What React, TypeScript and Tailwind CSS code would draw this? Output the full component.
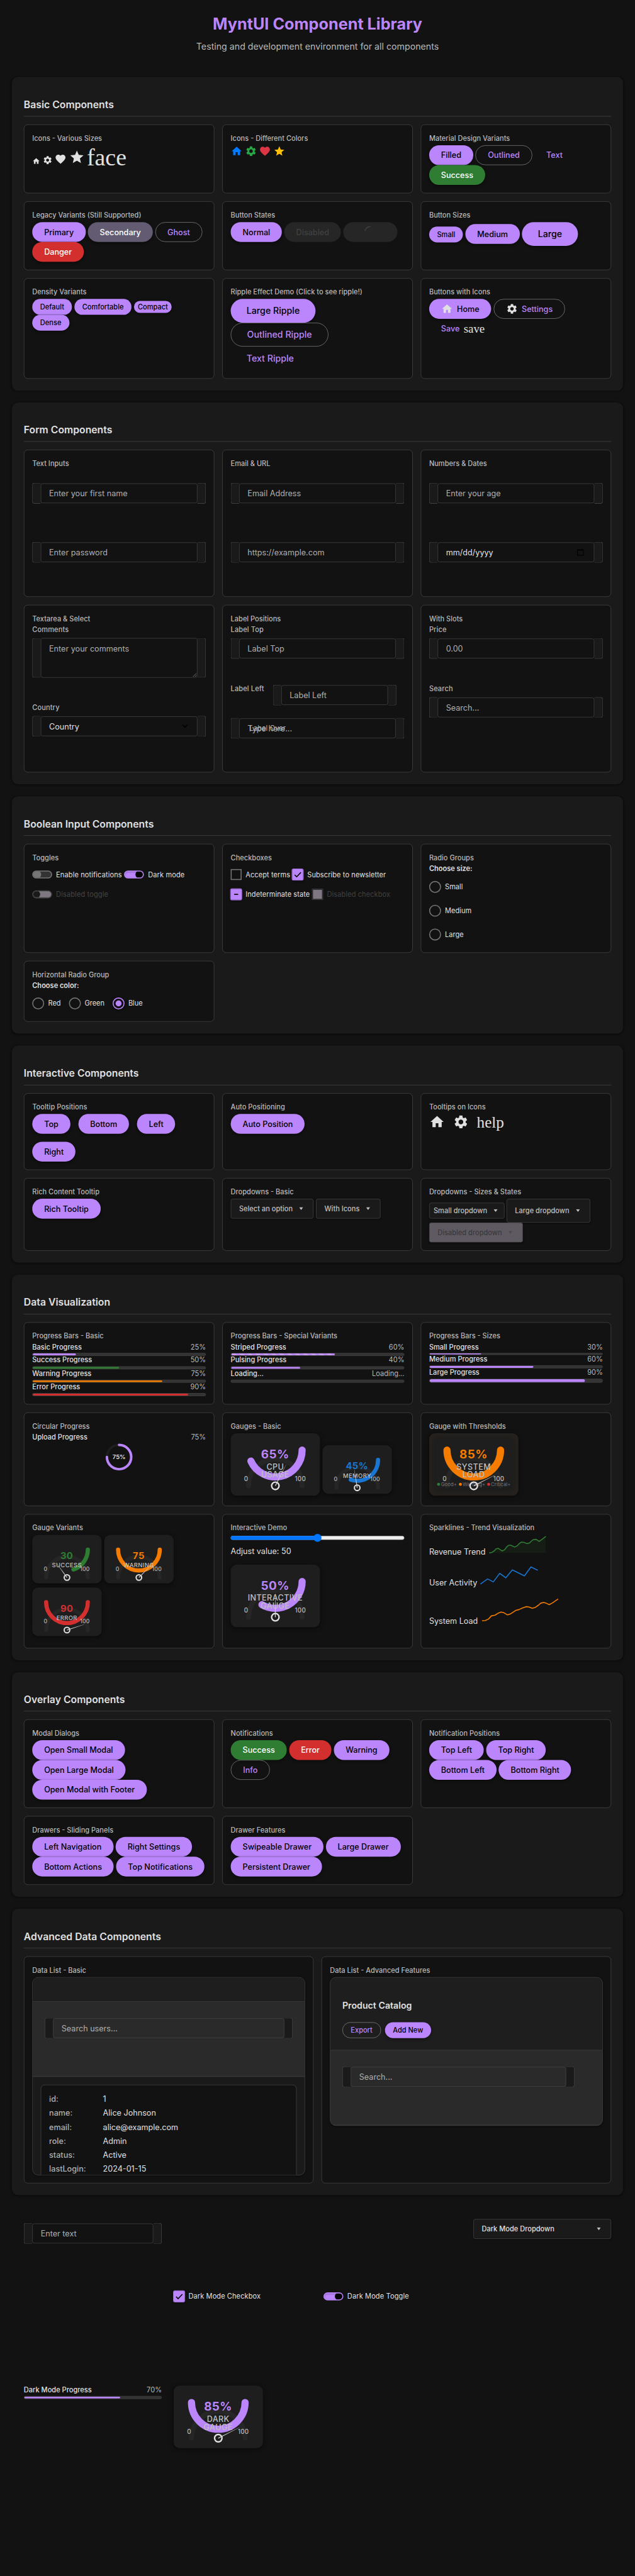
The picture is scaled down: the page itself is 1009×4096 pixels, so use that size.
import React from "react";

const HOME = "M10 20v-6h4v6h5v-8h3L12 3 2 12h3v8z";
const GEAR =
  "M19.14 12.94c.04-.3.06-.61.06-.94 0-.32-.02-.64-.07-.94l2.03-1.58c.18-.14.23-.41.12-.61l-1.92-3.32c-.12-.22-.37-.29-.59-.22l-2.39.96c-.5-.38-1.03-.7-1.62-.94l-.36-2.54c-.04-.24-.24-.41-.48-.41h-3.84c-.24 0-.43.17-.47.41l-.36 2.54c-.59.24-1.13.57-1.62.94l-2.39-.96c-.22-.08-.47 0-.59.22L2.74 8.87c-.12.21-.08.47.12.61l2.03 1.58c-.05.3-.09.63-.09.94s.02.64.07.94l-2.03 1.58c-.18.14-.23.41-.12.61l1.92 3.32c.12.22.37.29.59.22l2.39-.96c.5.38 1.03.7 1.62.94l.36 2.54c.05.24.24.41.48.41h3.84c.24 0 .44-.17.47-.41l.36-2.54c.59-.24 1.13-.56 1.62-.94l2.39.96c.22.08.47 0 .59-.22l1.92-3.32c.12-.22.07-.47-.12-.61l-2.01-1.58zM12 15.6c-1.98 0-3.6-1.62-3.6-3.6s1.62-3.6 3.6-3.6 3.6 1.62 3.6 3.6-1.62 3.6-3.6 3.6z";
const HEART =
  "M12 21.35l-1.45-1.32C5.4 15.36 2 12.28 2 8.5 2 5.42 4.42 3 7.5 3c1.74 0 3.41.81 4.5 2.09C13.09 3.81 14.76 3 16.5 3 19.58 3 22 5.42 22 8.5c0 3.78-3.4 6.86-8.55 11.54L12 21.35z";
const STAR = "M12 17.27L18.18 21l-1.64-7.03L22 9.24l-7.19-.61L12 2 9.19 8.63 2 9.24l5.46 4.73L5.82 21z";

function Icon({ d, size = 24, color = "#e0e0e0" }: { d: string; size?: number; color?: string }) {
  return (
    <svg width={size} height={size} viewBox="0 0 24 24" fill={color} className="block shrink-0">
      <path d={d} />
    </svg>
  );
}

function Section({ title, grid, children }: { title: string; grid: string; children: React.ReactNode }) {
  return (
    <section className="rounded-xl bg-[#1a1a1a] p-6 shadow-[0_1px_4px_rgba(0,0,0,0.5)]">
      <h2 className="mt-[16.6px] border-b border-[#444444] pb-2 text-[20px] font-semibold leading-[30px] text-[#e0e0e0]">
        {title}
      </h2>
      <div className={"mt-4 grid gap-4 " + grid}>{children}</div>
    </section>
  );
}

function Card({ title, children }: { title: string; children?: React.ReactNode }) {
  return (
    <div className="min-w-0 rounded-lg border border-[#444444] bg-[#121212] p-4">
      <h3 className="mb-1 text-[14px] font-medium leading-[21px] text-[#b8b8b8]">{title}</h3>
      {children}
    </div>
  );
}

function Row({ children }: { children: React.ReactNode }) {
  return <div className="flex items-baseline gap-[4.5px]">{children}</div>;
}

const VARIANTS = {
  filled: "bg-[#bb86fc] text-black shadow-[0_2px_6px_rgba(0,0,0,0.5)]",
  success: "bg-[#2e7d32] text-white shadow-[0_2px_6px_rgba(0,0,0,0.5)]",
  danger: "bg-[#d32f2f] text-white shadow-[0_2px_6px_rgba(0,0,0,0.5)]",
  secondary: "bg-[#625b71] text-white shadow-[0_2px_6px_rgba(0,0,0,0.5)]",
  outlined: "border border-[#7c7c7c] text-[#bb86fc]",
  text: "text-[#bb86fc]",
  disabled: "bg-[#262626] text-[#404040]",
};
const SIZES = {
  compact: "h-6 rounded-[12px] px-2 text-[14px]",
  small: "h-8 rounded-[16px] px-4 text-[14px]",
  medium: "h-10 rounded-[20px] px-6 text-[16px]",
  large: "h-12 rounded-[24px] px-8 text-[18px]",
};

function Button({
  v = "filled",
  s = "medium",
  children,
}: {
  v?: keyof typeof VARIANTS;
  s?: keyof typeof SIZES;
  children: React.ReactNode;
}) {
  return (
    <button
      className={
        "flex shrink-0 items-center justify-center gap-2 whitespace-nowrap font-medium leading-none " + SIZES[s] + " " + VARIANTS[v]
      }
    >
      {children}
    </button>
  );
}

function Box({
  text,
  muted = true,
  over,
  tall,
  dark = "bg-[#121212]",
  icon,
}: {
  text: string;
  muted?: boolean;
  over?: string;
  tall?: boolean;
  dark?: string;
  icon?: React.ReactNode;
}) {
  return (
    <div className={"flex items-stretch " + (tall ? "h-20" : "h-[42px]")}>
      <div className="w-[17px] shrink-0 rounded-l border-y border-l border-[#444444] bg-[#1a1a1a]" />
      <div
        className={
          "relative flex min-w-0 flex-1 rounded border border-[#444444] px-4 text-[16px] leading-[18px] " +
          dark +
          (tall ? " items-start pt-[11px]" : " my-px items-center") +
          (muted ? " text-[#b0b0b0]" : " text-[#e0e0e0]")
        }
      >
        <span className="whitespace-nowrap">{text}</span>
        {over && (
          <span className="absolute left-[20px] top-[10px] text-[14px] leading-[18px] tracking-[0.15px] text-[#b0b0b0]">{over}</span>
        )}
        {icon}
      </div>
      <div className="w-[17px] shrink-0 rounded-r border-y border-r border-[#444444] bg-[#1a1a1a]" />
    </div>
  );
}

function Label({ children }: { children?: React.ReactNode }) {
  return (
    <div className="h-[16.8px] shrink-0 whitespace-nowrap text-[14px] font-medium leading-[16.8px] tracking-[0.15px] text-[#b8b8b8]">
      {children}
    </div>
  );
}

function Field({ label, children }: { label?: string; children: React.ReactNode }) {
  return (
    <div className="mb-[52px]">
      <Label>{label}</Label>
      <div className="mt-[8.2px]">{children}</div>
    </div>
  );
}

function Toggle({ state, label }: { state: "off" | "on" | "disabled"; label: string }) {
  const track = {
    off: "border-[#757575] bg-[#333333]",
    on: "border-[#bb86fc] bg-[#bb86fc] shadow-[inset_0_1px_3px_rgba(0,0,0,0.35)]",
    disabled: "border-[#444444] bg-[#7f7882]",
  }[state];
  const knob = { off: "left-0 bg-[#757575]", on: "left-[21px] bg-black", disabled: "left-[-2px] bg-[#1a1a1a]" }[state];
  return (
    <div className="flex h-10 items-center gap-2">
      <div className={"relative h-4 w-10 shrink-0 overflow-hidden rounded-full border-2 " + track}>
        <div className={"absolute -top-[2px] h-4 w-4 rounded-full " + knob} />
      </div>
      <span
        className={
          "whitespace-nowrap text-[14px] leading-[21px] tracking-[0.15px] " + (state === "disabled" ? "text-[#444444]" : "text-[#e0e0e0]")
        }
      >
        {label}
      </span>
    </div>
  );
}

function Checkbox({ state, label }: { state: "off" | "on" | "mixed" | "disabled"; label: string }) {
  const cls = {
    off: "border-2 border-[#757575]",
    on: "rounded-[2px] bg-[#bb86fc] outline outline-[#bb86fc] shadow-[0_1px_5px_rgba(0,0,0,0.6)]",
    mixed: "rounded-[2px] bg-[#bb86fc] outline outline-[#bb86fc] shadow-[0_1px_5px_rgba(0,0,0,0.6)]",
    disabled: "border-2 border-[#2c2c2c] bg-[#7f7882]",
  }[state];
  return (
    <div className="flex h-10 items-center gap-2">
      <div className={"flex h-[22px] w-[22px] shrink-0 items-center justify-center " + cls}>
        {state === "on" && (
          <svg width="18" height="18" viewBox="0 0 18 18" fill="none" stroke="#000" strokeWidth="2">
            <path d="M3 9.6 7 13.6 15.6 4.6" />
          </svg>
        )}
        {state === "mixed" && <div className="h-[2px] w-2 bg-black" />}
      </div>
      <span
        className={
          "whitespace-nowrap text-[14px] leading-[21px] tracking-[0.1px] " + (state === "disabled" ? "text-[#404040]" : "text-[#e0e0e0]")
        }
      >
        {label}
      </span>
    </div>
  );
}

function Radio({ label, on }: { label: string; on?: boolean }) {
  return (
    <div className="flex h-6 items-center gap-2">
      <div
        className={
          "flex h-6 w-6 items-center justify-center rounded-full border-2 " +
          (on ? "border-[#bb86fc] shadow-[0_1px_6px_rgba(0,0,0,0.6)]" : "border-[#757575]")
        }
      >
        {on && <div className="h-3 w-3 rounded-full bg-[#bb86fc]" />}
      </div>
      <span className="text-[14px] leading-none text-[#e0e0e0]">{label}</span>
    </div>
  );
}

function Caret({ color = "#b0b0b0" }: { color?: string }) {
  return (
    <svg width="8" height="6" viewBox="0 0 8 6" fill={color} className="mr-[4.5px] block">
      <path d="M0 0h8L4 5.6z" />
    </svg>
  );
}

function Dropdown({ label, cls, disabled }: { label: string; cls: string; disabled?: boolean }) {
  return (
    <div
      className={
        "flex shrink-0 items-center justify-between gap-[13px] whitespace-nowrap rounded border border-[#444444] text-[14px] font-medium leading-none shadow-[0_1px_3px_rgba(0,0,0,0.4)] " +
        (disabled ? "bg-[#5f5a62] text-[#3a383c] " : "bg-[#1a1a1a] ") +
        cls
      }
    >
      <span>{label}</span>
      <Caret color={disabled ? "#4c484e" : "#c0c0c0"} />
    </div>
  );
}

const BAR_COLORS = {
  primary: "bg-[#bb86fc]",
  success: "bg-[#2e7d32]",
  warning: "bg-[#f57c00]",
  error: "bg-[#d32f2f]",
  striped:
    "bg-[#bb86fc] bg-[linear-gradient(45deg,rgba(255,255,255,0.2)_25%,transparent_25%,transparent_50%,rgba(255,255,255,0.2)_50%,rgba(255,255,255,0.2)_75%,transparent_75%)] bg-[length:16px_16px]",
};

function Progress({
  label,
  value,
  color = "primary",
  h = "h-1.5",
}: {
  label: string;
  value?: number;
  color?: keyof typeof BAR_COLORS;
  h?: string;
}) {
  return (
    <div>
      <div className="mb-1 flex justify-between text-[14px] leading-[16.8px]">
        <span className="font-medium text-[#e0e0e0]">{label}</span>
        <span className="text-[#b8b8b8]">{value === undefined ? "Loading..." : value + "%"}</span>
      </div>
      <div className={"overflow-hidden rounded-full border border-[#444444] bg-[#333333] " + h}>
        {value !== undefined && <div className={"h-full rounded-full " + BAR_COLORS[color]} style={{ width: value + "%" }} />}
      </div>
    </div>
  );
}

function Gauge({
  pct,
  text,
  lines,
  color,
  small,
  legend,
}: {
  pct: number;
  text: string;
  lines: string[];
  color: string;
  small?: boolean;
  legend?: boolean;
}) {
  const w = small ? 140 : 180;
  const h = small ? 98 : 126;
  const c = w / 2;
  const r = small ? 42 : 54;
  const cy = small ? 29.8 : 34;
  const by = small ? 86 : 106;
  const a = (Math.min(180, pct * 2.4) * Math.PI) / 180;
  const len = small ? 37 : 48;
  return (
    <div
      className={
        "shrink-0 rounded-xl bg-[#1e1e1e] " +
        (legend
          ? "shadow-[0_2px_8px_rgba(0,0,0,0.5),inset_0_0_20px_rgba(245,124,0,0.07)]"
          : "shadow-[0_2px_8px_rgba(0,0,0,0.5)]")
      }
    >
      <svg width={w} height={h} viewBox={`0 0 ${w} ${h}`} className="block font-[Inter,sans-serif]" textAnchor="middle">
        <path
          d={`M${c - r} ${by}A${r} ${r} 0 0 1 ${c + r} ${by}`}
          fill="none"
          stroke="#262626"
          strokeWidth={small ? 8 : 10}
          strokeLinecap="round"
        />
        <path
          d={`M${c + r} ${cy}A${r} ${r} 0 0 1 ${c + r * Math.cos(a)} ${cy + r * Math.sin(a)}`}
          fill="none"
          stroke={color}
          strokeWidth={small ? 8.4 : 14.4}
          strokeLinecap="round"
        />
        <text x={c - 0.4} y={small ? 48.8 : 50.8} fontSize={small ? 18.67 : 24} fontWeight="700" fill={color} letterSpacing="0.5">
          {text}
        </text>
        {lines.map((l, i) => (
          <text
            key={l}
            x={c - 0.2}
            y={(small ? 65.8 : 73) + i * 16.3}
            fontSize={small ? 12 : 16}
            fontWeight="500"
            fill="#c0c0c0"
            letterSpacing="0.5"
          >
            {l}
          </text>
        ))}
        <g fontSize={small ? 11 : 12.5} fill="#b8b8b8" fontWeight="500" letterSpacing="0.3">
          <text x={small ? 26.8 : 31.2} y={small ? 72.3 : 96.8}>
            0
          </text>
          <text x={small ? 106.2 : 140.5} y={small ? 72.3 : 96.8}>
            100
          </text>
        </g>
        {legend && (
          <g fontSize="10" fill="#757575" textAnchor="start">
            <circle cx="19" cy="103" r="3" fill="#2e7d32" />
            <text x="23.8" y="106.4">
              Good+
            </text>
            <circle cx="63" cy="103" r="3" fill="#f57c00" />
            <text x="67.5" y="106.4">
              Warning+
            </text>
            <circle cx="120" cy="103" r="3" fill="#d32f2f" />
            <text x="124.6" y="106.4">
              Critical+
            </text>
          </g>
        )}
        <circle cx={c} cy={by} r={small ? 5.6 : 7.5} fill={legend ? "none" : "#1e1e1e"} stroke="#e0e0e0" strokeWidth={small ? 2.6 : 3} />
        <g transform={`rotate(${(pct - 50) * 1.8} ${c} ${by})`}>
          <path d={`M${c - 0.9} ${by}L${c - 0.15} ${by - len}h0.3L${c + 0.9} ${by}z`} fill="#d0d0d0" />
        </g>
      </svg>
    </div>
  );
}

function Spark({ w, h, color, points, fill }: { w: number; h: number; color: string; points: string; fill?: string }) {
  return (
    <svg width={w} height={h} viewBox={`0 0 ${w} ${h}`} className="block shrink-0 overflow-visible">
      {fill && <polygon points={points + fill} fill={color} fillOpacity="0.1" />}
      <polyline points={points} fill="none" stroke={color} strokeWidth="2" strokeLinejoin="round" strokeLinecap="round" />
    </svg>
  );
}

const THREE = "grid-cols-3";
const USER = [
  ["id:", "1"],
  ["name:", "Alice Johnson"],
  ["email:", "alice@example.com"],
  ["role:", "Admin"],
  ["status:", "Active"],
  ["lastLogin:", "2024-01-15"],
];

const PURPLE = "#bb86fc";

function Library() {
  return (
    <div className="h-[5196px] w-[1280px] origin-top-left scale-[0.7883] bg-[#121212] font-[Inter,sans-serif] text-[#e0e0e0]">
      <header className="flex h-[155px] flex-col items-center pt-6">
        <h1 className="text-[32px] font-bold leading-[48px] text-[#bb86fc]">MyntUI Component Library</h1>
        <p className="mt-2 text-[18px] leading-[27px] text-[#b8b8b8]">Testing and development environment for all components</p>
      </header>

      <main className="flex flex-col gap-6 px-6">
        <Section title="Basic Components" grid={THREE + " grid-rows-[139px_139px_203px]"}>
          <Card title="Icons - Various Sizes">
            <Row>
              <Icon d={HOME} size={16} />
              <Icon d={GEAR} size={20} />
              <Icon d={HEART} size={24} />
              <Icon d={STAR} size={32} />
              <span className="font-['Liberation_Serif',serif] text-[48px] leading-[48px]">face</span>
            </Row>
          </Card>
          <Card title="Icons - Different Colors">
            <Row>
              <Icon d={HOME} color="#007bff" />
              <Icon d={GEAR} color="#28a745" />
              <Icon d={HEART} color="#dc3545" />
              <Icon d={STAR} color="#ffc107" />
            </Row>
          </Card>
          <Card title="Material Design Variants">
            <Row>
              <Button>Filled</Button>
              <Button v="outlined">Outlined</Button>
              <Button v="text">Text</Button>
            </Row>
            <Row>
              <Button v="success">Success</Button>
            </Row>
          </Card>
          <Card title="Legacy Variants (Still Supported)">
            <Row>
              <Button>Primary</Button>
              <Button v="secondary">Secondary</Button>
              <Button v="outlined">Ghost</Button>
            </Row>
            <Row>
              <Button v="danger">Danger</Button>
            </Row>
          </Card>
          <Card title="Button States">
            <div className="flex gap-[4.5px]">
              <Button>Normal</Button>
              <Button v="disabled">Disabled</Button>
              <div className="flex h-10 w-[108.6px] items-center justify-center rounded-[20px] bg-[#262626]">
                <svg width="24" height="24" viewBox="0 0 24 24" fill="none" stroke="#3f3f3f" strokeWidth="2">
                  <path d="M1.5 10A11 11 0 0 1 13 1" />
                </svg>
              </div>
            </div>
          </Card>
          <Card title="Button Sizes">
            <Row>
              <Button s="small">Small</Button>
              <Button>Medium</Button>
              <Button s="large">Large</Button>
            </Row>
          </Card>
          <Card title="Density Variants">
            <Row>
              <Button s="small">Default</Button>
              <Button s="small">Comfortable</Button>
              <Button s="compact">Compact</Button>
            </Row>
            <Row>
              <Button s="small">Dense</Button>
            </Row>
          </Card>
          <Card title="Ripple Effect Demo (Click to see ripple!)">
            <Row>
              <Button s="large">Large Ripple</Button>
            </Row>
            <Row>
              <Button s="large" v="outlined">
                Outlined Ripple
              </Button>
            </Row>
            <Row>
              <Button s="large" v="text">
                Text Ripple
              </Button>
            </Row>
          </Card>
          <Card title="Buttons with Icons">
            <div className="flex gap-[4.5px]">
              <Button>
                <Icon d={HOME} />
                Home
              </Button>
              <Button v="outlined">
                <Icon d={GEAR} />
                Settings
              </Button>
            </div>
            <div className="flex">
              <Button v="text">
                Save
                <span className="font-['Liberation_Serif',serif] text-[24px] font-normal leading-[24px] text-[#e0e0e0]">save</span>
              </Button>
            </div>
          </Card>
        </Section>

        <Section title="Form Components" grid={THREE + " grid-rows-[297px_338px]"}>
          <Card title="Text Inputs">
            <Field>
              <Box text="Enter your first name" />
            </Field>
            <Field>
              <Box text="Enter password" />
            </Field>
          </Card>
          <Card title="Email & URL">
            <Field>
              <Box text="Email Address" />
            </Field>
            <Field>
              <Box text="https://example.com" />
            </Field>
          </Card>
          <Card title="Numbers & Dates">
            <Field>
              <Box text="Enter your age" />
            </Field>
            <Field>
              <Box
                text="mm/dd/yyyy"
                muted={false}
                icon={
                  <svg width="14" height="14" viewBox="0 0 14 14" fill="none" stroke="#000" strokeWidth="1.4" className="ml-auto mr-1">
                    <path d="M1 2h12v11H1zM1 3h12M4 0v2M10 0v2" />
                  </svg>
                }
              />
            </Field>
          </Card>
          <Card title="Textarea & Select">
            <Field label="Comments">
              <Box
                text="Enter your comments"
                tall
                icon={
                  <svg width="9" height="9" viewBox="0 0 9 9" stroke="#b0b0b0" strokeWidth="0.8" className="absolute bottom-0 right-0">
                    <path d="M1 8 8 1M5 8 8 5" />
                  </svg>
                }
              />
            </Field>
            <Field label="Country">
              <Box
                text="Country"
                muted={false}
                icon={
                  <svg width="12" height="8" viewBox="0 0 12 8" fill="none" stroke="#000" strokeWidth="2" className="ml-auto mr-0.5">
                    <path d="M1 1l5 5 5-5" />
                  </svg>
                }
              />
            </Field>
          </Card>
          <Card title="Label Positions">
            <Field label="Label Top">
              <Box text="Label Top" />
            </Field>
            <div className="mb-[24.5px] flex items-start pr-4">
              <div className="w-[84.8px] shrink-0">
                <Label>Label Left</Label>
              </div>
              <div className="flex-1">
                <Box text="Label Left" />
              </div>
            </div>
            <Box text="Type here..." over="Label Over" />
          </Card>
          <Card title="With Slots">
            <Field label="Price">
              <Box text="0.00" />
            </Field>
            <Field label="Search">
              <Box text="Search..." />
            </Field>
          </Card>
        </Section>

        <Section title="Boolean Input Components" grid={THREE + " grid-rows-[219.8px_123.8px]"}>
          <Card title="Toggles">
            <div className="flex gap-[4.5px]">
              <Toggle state="off" label="Enable notifications" />
              <Toggle state="on" label="Dark mode" />
            </div>
            <Toggle state="disabled" label="Disabled toggle" />
          </Card>
          <Card title="Checkboxes">
            <div className="flex gap-[4.5px]">
              <Checkbox state="off" label="Accept terms" />
              <Checkbox state="on" label="Subscribe to newsletter" />
            </div>
            <div className="flex gap-[4.5px]">
              <Checkbox state="mixed" label="Indeterminate state" />
              <Checkbox state="disabled" label="Disabled checkbox" />
            </div>
          </Card>
          <Card title="Radio Groups">
            <div className="text-[14px] font-semibold leading-[16.8px]">Choose size:</div>
            <div className="mt-4 flex flex-col gap-6">
              <Radio label="Small" />
              <Radio label="Medium" />
              <Radio label="Large" />
            </div>
          </Card>
          <Card title="Horizontal Radio Group">
            <div className="text-[14px] font-semibold leading-[16.8px]">Choose color:</div>
            <div className="mt-4 flex gap-4">
              <Radio label="Red" />
              <Radio label="Green" />
              <Radio label="Blue" on />
            </div>
          </Card>
        </Section>

        <Section title="Interactive Components" grid={THREE + " grid-rows-[155px_147px]"}>
          <Card title="Tooltip Positions">
            <div className="flex gap-4">
              <Button>Top</Button>
              <Button>Bottom</Button>
              <Button>Left</Button>
            </div>
            <div className="mt-4 flex">
              <Button>Right</Button>
            </div>
          </Card>
          <Card title="Auto Positioning">
            <Row>
              <Button>Auto Position</Button>
            </Row>
          </Card>
          <Card title="Tooltips on Icons">
            <div className="flex gap-4">
              <Icon d={HOME} size={32} />
              <Icon d={GEAR} size={32} />
              <span className="font-['Liberation_Serif',serif] text-[32px] leading-[32px]">help</span>
            </div>
          </Card>
          <Card title="Rich Content Tooltip">
            <Row>
              <Button>Rich Tooltip</Button>
            </Row>
          </Card>
          <Card title="Dropdowns - Basic">
            <div className="flex gap-[4.5px] text-[#c0c0c0]">
              <Dropdown label="Select an option" cls="h-10 px-4" />
              <Dropdown label="With Icons" cls="h-10 px-4" />
            </div>
          </Card>
          <Card title="Dropdowns - Sizes & States">
            <div className="flex items-baseline gap-[4.5px] text-[#c0c0c0]">
              <Dropdown label="Small dropdown" cls="h-8 px-2" />
              <Dropdown label="Large dropdown" cls="h-12 px-4" />
            </div>
            <div className="flex">
              <Dropdown label="Disabled dropdown" cls="h-10 px-4" disabled />
            </div>
          </Card>
        </Section>

        <Section title="Data Visualization" grid={THREE + " grid-rows-[166px_189px_271px]"}>
          <Card title="Progress Bars - Basic">
            <Progress label="Basic Progress" value={25} />
            <Progress label="Success Progress" value={50} color="success" />
            <Progress label="Warning Progress" value={75} color="warning" />
            <Progress label="Error Progress" value={90} color="error" />
          </Card>
          <Card title="Progress Bars - Special Variants">
            <Progress label="Striped Progress" value={60} color="striped" />
            <Progress label="Pulsing Progress" value={40} />
            <Progress label="Loading..." />
          </Card>
          <Card title="Progress Bars - Sizes">
            <Progress label="Small Progress" value={30} h="h-1" />
            <Progress label="Medium Progress" value={60} />
            <Progress label="Large Progress" value={90} h="h-2" />
          </Card>
          <Card title="Circular Progress">
            <div className="flex justify-between text-[14px] leading-[16.8px]">
              <span className="font-medium">Upload Progress</span>
              <span className="text-[#b8b8b8]">75%</span>
            </div>
            <div className="mt-[2px] flex justify-center">
              <svg width="60" height="60" viewBox="0 0 60 60" fill="none" className="font-[Inter,sans-serif]">
                <circle cx="30" cy="30" r="24.5" stroke="#1e1e1e" strokeWidth="5" />
                <path d="M30 5.5A24.5 24.5 0 1 1 5.5 30" stroke="#bb86fc" strokeWidth="5" strokeLinecap="round" />
                <text x="30" y="34.3" textAnchor="middle" fontSize="12" fontWeight="600" fill="#e0e0e0">
                  75%
                </text>
              </svg>
            </div>
          </Card>
          <Card title="Gauges - Basic">
            <div className="flex gap-[4.5px]">
              <Gauge pct={65} text="65%" lines={["CPU", "USAGE"]} color={PURPLE} />
              <div className="mt-6">
                <Gauge pct={45} text="45%" lines={["MEMORY"]} color="#1976d2" small />
              </div>
            </div>
          </Card>
          <Card title="Gauge with Thresholds">
            <div className="flex">
              <Gauge pct={85} text="85%" lines={["SYSTEM", "LOAD"]} color="#f57c00" legend />
            </div>
          </Card>
          <Card title="Gauge Variants">
            <div className="flex flex-wrap gap-x-[4.5px] gap-y-2">
              <Gauge pct={30} text="30" lines={["SUCCESS"]} color="#2e7d32" small />
              <Gauge pct={75} text="75" lines={["WARNING"]} color="#f57c00" small />
              <Gauge pct={90} text="90" lines={["ERROR"]} color="#d32f2f" small />
            </div>
          </Card>
          <Card title="Interactive Demo">
            <div className="relative mt-[6px] h-2 rounded-full border border-[#b2b2b2] bg-[#efefef]">
              <div className="absolute -left-px -top-px h-2 w-1/2 rounded-l-full bg-[#0075ff]" />
              <div className="absolute -top-[5px] left-1/2 h-4 w-4 -translate-x-1/2 rounded-full bg-[#0075ff]" />
            </div>
            <p className="mt-[10px] text-[16px] leading-6">Adjust value: 50</p>
            <div className="mt-4 flex">
              <Gauge pct={50} text="50%" lines={["INTERACTIVE", "GAUGE"]} color={PURPLE} />
            </div>
          </Card>
          <Card title="Sparklines - Trend Visualization">
            <div className="flex items-baseline gap-[4.5px] text-[16px] leading-6">
              <span>Revenue Trend</span>
              <Spark
                w={120}
                h={40}
                color="#2e7d32"
                points="4,36.2 8,35.5 13.7,31.9 17,28.2 21,27.2 24.3,28.9 29.2,32.5 34.1,29.9 39,23.5 42.3,20.9 46.4,20.9 54.6,24.5 59.4,22.2 64.3,16.9 68.4,14.5 73.3,15.2 79,17.5 84,16.5 88.8,11.9 92.1,9.5 97.8,8.9 103.5,13.2 108.4,9.9 116.6,3.5"
                fill=" 116.6,36.2 4,36.2"
              />
            </div>
            <div className="mt-[22.4px] flex items-baseline gap-[4.5px] text-[16px] leading-6">
              <span>User Activity</span>
              <Spark
                w={120}
                h={33.6}
                color="#1976d2"
                points="3,30.6 16.9,20.9 28.3,26.9 41.3,9.6 53.6,18.6 66.7,2.6 79.7,8.9 91.1,14.6 104.2,-3.4 117.3,2.9"
              />
            </div>
            <div className="mt-[22px] flex items-baseline gap-[4.5px] text-[16px] leading-6">
              <span>System Load</span>
              <Spark
                w={160}
                h={50}
                color="#f57c00"
                points="4.4,43 10.2,42.7 16.7,39.7 22.4,33.4 29.8,32 37.1,27.4 42,25.7 47.7,27 55,31.4 61.6,29 72.2,22 77.9,20.7 85.3,17.4 92.6,14.7 98.3,15.4 104.9,18 111.4,16 117.1,12 122,7.7 127.7,6.4 133.4,8 139.1,10.7 145.7,7 156.3,-0.3"
              />
            </div>
          </Card>
        </Section>

        <Section title="Overlay Components" grid={THREE + " grid-rows-[179px_139px]"}>
          <Card title="Modal Dialogs">
            <Row>
              <Button>Open Small Modal</Button>
            </Row>
            <Row>
              <Button>Open Large Modal</Button>
            </Row>
            <Row>
              <Button>Open Modal with Footer</Button>
            </Row>
          </Card>
          <Card title="Notifications">
            <Row>
              <Button v="success">Success</Button>
              <Button v="danger">Error</Button>
              <Button>Warning</Button>
            </Row>
            <Row>
              <Button v="outlined">Info</Button>
            </Row>
          </Card>
          <Card title="Notification Positions">
            <Row>
              <Button>Top Left</Button>
              <Button>Top Right</Button>
            </Row>
            <Row>
              <Button>Bottom Left</Button>
              <Button>Bottom Right</Button>
            </Row>
          </Card>
          <Card title="Drawers - Sliding Panels">
            <Row>
              <Button>Left Navigation</Button>
              <Button>Right Settings</Button>
            </Row>
            <Row>
              <Button>Bottom Actions</Button>
              <Button>Top Notifications</Button>
            </Row>
          </Card>
          <Card title="Drawer Features">
            <Row>
              <Button>Swipeable Drawer</Button>
              <Button>Large Drawer</Button>
            </Row>
            <Row>
              <Button>Persistent Drawer</Button>
            </Row>
          </Card>
        </Section>

        <Section title="Advanced Data Components" grid="grid-cols-2 grid-rows-[458.6px]">
          <Card title="Data List - Basic">
            <div className="flex h-[400px] flex-col overflow-hidden rounded-xl border border-[#444444] bg-[#1a1a1a] shadow-[0_1px_4px_rgba(0,0,0,0.5)]">
              <div className="h-[49px] shrink-0 border-b border-[#444444] bg-[#1e1e1e]" />
              <div className="h-[151px] shrink-0 border-b border-[#444444] bg-[#2a2a2a] px-6 pt-8">
                <Box text="Search users..." dark="bg-[#2a2a2a]" />
              </div>
              <div className="px-4 pt-4">
                <div className="h-[260px] rounded-lg border border-[#444444] bg-[#121212] px-4 pt-4">
                  {USER.map(([k, val]) => (
                    <div key={k} className="flex h-7 text-[16px] leading-6">
                      <span className="w-[108.5px] font-medium text-[#b0b0b0]">{k}</span>
                      <span>{val}</span>
                    </div>
                  ))}
                </div>
              </div>
            </div>
          </Card>
          <Card title="Data List - Advanced Features">
            <div className="flex h-[300px] flex-col overflow-hidden rounded-xl border border-[#444444] bg-[#2a2a2a] shadow-[0_1px_4px_rgba(0,0,0,0.5)]">
              <div className="h-[147px] shrink-0 border-b border-[#444444] bg-[#1e1e1e] px-6 pt-[43px]">
                <h3 className="text-[18px] font-semibold leading-[27px]">Product Catalog</h3>
                <div className="mt-5 flex gap-2">
                  <Button v="outlined" s="small">
                    Export
                  </Button>
                  <Button s="small">Add New</Button>
                </div>
              </div>
              <div className="h-[151px] shrink-0 border-b border-[#444444] pl-6 pr-[56px] pt-8">
                <Box text="Search..." dark="bg-[#2a2a2a]" />
              </div>
            </div>
          </Card>
        </Section>
      </main>

      <div className="mt-[47.6px] grid grid-cols-4 grid-rows-[136px_200px_160px] gap-x-6 px-12">
        <div className="pt-2">
          <Box text="Enter text" />
        </div>
        <div className="col-start-4">
          <Dropdown label="Dark Mode Dropdown" cls="h-10 px-4" />
        </div>
        <div className="col-start-2">
          <Checkbox state="on" label="Dark Mode Checkbox" />
        </div>
        <div className="col-start-3">
          <Toggle state="on" label="Dark Mode Toggle" />
        </div>
        <div className="col-start-1">
          <Progress label="Dark Mode Progress" value={70} />
        </div>
        <div className="flex items-start">
          <Gauge pct={85} text="85%" lines={["DARK", "GAUGE"]} color={PURPLE} />
        </div>
      </div>
    </div>
  );
}

export default function App() {
  return (
    <div className="h-[4096px] w-[1009px] overflow-hidden bg-[#121212]">
      <Library />
    </div>
  );
}
